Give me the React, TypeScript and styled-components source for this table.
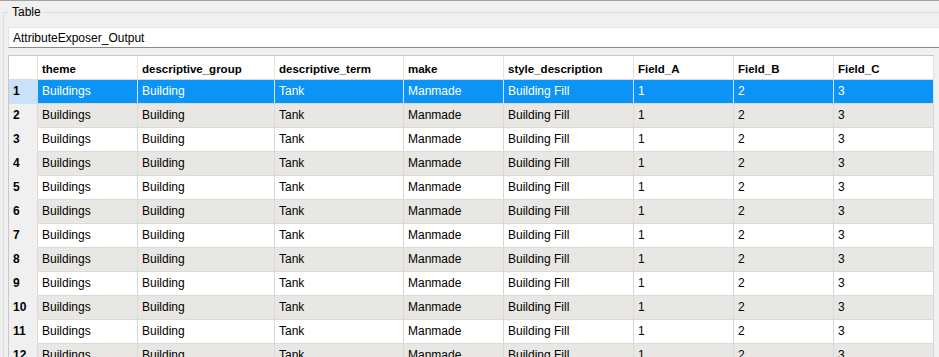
import styled, {createGlobalStyle} from "styled-components";

const GlobalStyle = createGlobalStyle`
    html, body {
        margin: 0;
        padding: 0;
        height: 100%;
        overflow: hidden;
        background-color: #f0f0f0;
    }
    body {
        font-family: "Liberation Sans", Arial, sans-serif;
        font-size: 12px;
        color: #000;
    }
`

const Window = styled.div`
    height: 357px;
    overflow: hidden;
    border-top: 1px solid #a3a3a3;
    box-sizing: border-box;
`

const GroupBox = styled.fieldset`
    margin: 3px -40px 0 3px;
    padding: 0 0 0 4px;
    border: 1px solid #dcdcdc;
    min-inline-size: 0;
`

const GroupTitle = styled.legend`
    padding: 0 3px 0 4px;
    margin: 0;
    font-size: 12px;
    line-height: 16px;
`

const NameField = styled.input`
    display: block;
    box-sizing: border-box;
    width: 100%;
    height: 21px;
    margin: 7px 0 0 0;
    padding: 0 4px;
    border: 1px solid #e3e3e3;
    border-bottom-color: #8a8a8a;
    background: #fff;
    font-family: "Liberation Sans", Arial, sans-serif;
    font-size: 12px;
    color: #000;
    outline: none;
`

const Grid = styled.table`
    margin-top: 7px;
    table-layout: fixed;
    width: 926px;
    border-collapse: separate;
    border-spacing: 0;
    border-top: 1px solid #c8c8c8;
    border-left: 1px solid #c8c8c8;
`

const HeadCell = styled.th`
    box-sizing: border-box;
    height: 24px;
    padding: 3px 4px 0;
    line-height: 20px;
    text-align: left;
    font-size: 11.5px;
    font-weight: bold;
    background: #fff;
    border-right: 1px solid #e3e3e3;
    border-bottom: 1px solid #d9d9d9;
    white-space: nowrap;
    overflow: hidden;
    vertical-align: top;
`

const RowNumber = styled.th<{ $selected?: boolean }>`
    box-sizing: border-box;
    height: 24px;
    padding: 0 4px;
    line-height: 23px;
    text-align: left;
    font-weight: bold;
    font-size: 12px;
    background: ${p => p.$selected ? "#c9e2f7" : "#f0f0f0"};
    border-right: 1px solid #d9d9d9;
    border-bottom: 1px solid ${p => p.$selected ? "#c9e2f7" : "#f0f0f0"};
    vertical-align: top;
`

const Cell = styled.td<{ $selected?: boolean; $alt?: boolean }>`
    box-sizing: border-box;
    height: 24px;
    padding: 0 4px;
    line-height: 23px;
    white-space: nowrap;
    overflow: hidden;
    vertical-align: top;
    color: ${p => p.$selected ? "#fff" : "#000"};
    background: ${p => p.$selected ? "#0b93f6" : p.$alt ? "#e9e7e3" : "#fff"};
    border-right: 1px solid ${p => p.$selected ? "#cfe6fa" : "#d9d9d9"};
    border-bottom: 1px solid #d9d9d9;
`

const columns = [
    {name: "theme", width: 100},
    {name: "descriptive_group", width: 137},
    {name: "descriptive_term", width: 129},
    {name: "make", width: 100},
    {name: "style_description", width: 130},
    {name: "Field_A", width: 100},
    {name: "Field_B", width: 100},
    {name: "Field_C", width: 100},
]

const record = ["Buildings", "Building", "Tank", "Manmade", "Building Fill", "1", "2", "3"]

const rows = Array.from({length: 12}, (_, i) => i + 1)

export default function App() {
    return (
        <>
            <GlobalStyle/>
            <Window>
                <GroupBox>
                    <GroupTitle>Table</GroupTitle>
                    <NameField readOnly value="AttributeExposer_Output"/>
                    <Grid>
                        <colgroup>
                            <col style={{width: 29}}/>
                            {columns.map(c => <col key={c.name} style={{width: c.width}}/>)}
                        </colgroup>
                        <thead>
                            <tr>
                                <HeadCell/>
                                {columns.map(c => <HeadCell key={c.name}>{c.name}</HeadCell>)}
                            </tr>
                        </thead>
                        <tbody>
                            {rows.map(n => (
                                <tr key={n}>
                                    <RowNumber $selected={n === 1}>{n}</RowNumber>
                                    {record.map((v, i) => (
                                        <Cell key={i} $selected={n === 1} $alt={n % 2 === 0}>{v}</Cell>
                                    ))}
                                </tr>
                            ))}
                        </tbody>
                    </Grid>
                </GroupBox>
            </Window>
        </>
    )
}
